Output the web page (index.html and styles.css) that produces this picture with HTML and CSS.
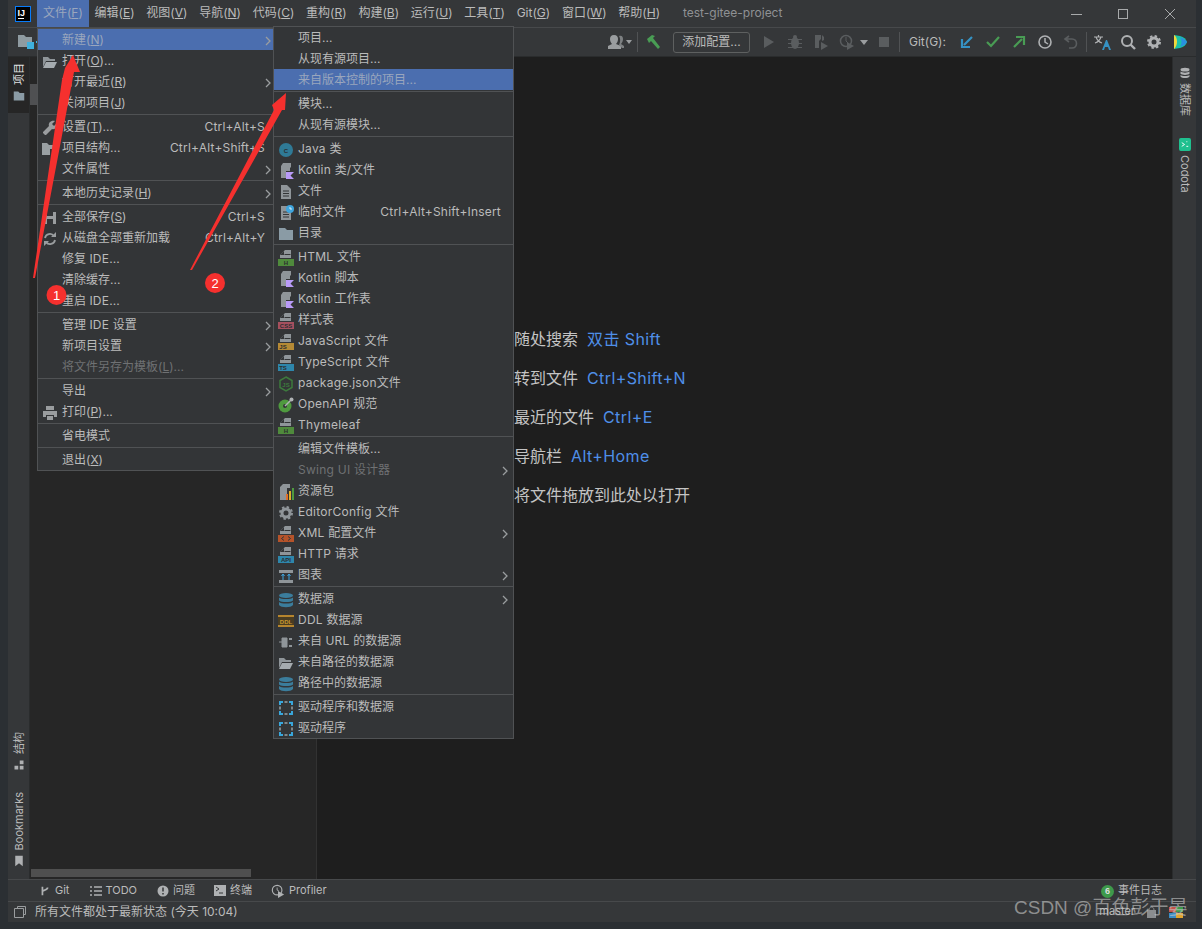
FILE: index.html
```html
<!DOCTYPE html>
<html lang="zh">
<head>
<meta charset="utf-8">
<title>test-gitee-project</title>
<link rel="stylesheet" href="styles.css">
</head>
<body>
<svg class="defs" width="0" height="0">
  <symbol id="dt" viewBox="0 0 16 16"><path d="M7 0h6v8H2V5z" fill="#8f9599"/><path d="M6 1v4H2z" fill="#333537"/><path d="M6.500 4.500H12.500" stroke="#333537"/></symbol>
  <symbol id="kt" viewBox="0 0 16 16"><path d="M5 0h8v4l-1 1v3H8v7H3V3z" fill="#8f9599"/><path d="M8 9h8l-3.500 3.500L16 16H8z" fill="#b99bf8"/></symbol>
  <symbol id="doc" viewBox="0 0 16 16"><path d="M3 1h6l4 4v10H3z" fill="#8f9599"/><path d="M5 7h6M5 9.500h6M5 12h6" stroke="#333537"/></symbol>
  <symbol id="fold" viewBox="0 0 16 16"><path d="M1 2h6l2 2h6v10H1z" fill="#8a9ba5"/></symbol>
  <symbol id="ofold" viewBox="0 0 16 16"><path d="M1 3h5l2 2h5v2H4l-3 6z" fill="#8f9599"/><path d="M4 8h11l-3 6H1z" fill="#a5abaf"/></symbol>
  <symbol id="db" viewBox="0 0 16 16"><g fill="#3b7d9c"><ellipse cx="8" cy="3.500" rx="7" ry="2.500"/><path d="M1 5.500c2 2 12 2 14 0v3c-2 2-12 2-14 0z"/><path d="M1 10c2 2 12 2 14 0v3c-2 3-12 3-14 0z"/></g></symbol>
  <symbol id="drv" viewBox="0 0 16 16"><path d="M2 5V2h3M11 2h3v3M14 11v3h-3M5 14H2v-3" fill="none" stroke="#39a7dc" stroke-width="2"/><path d="M6.500 2h3M6.500 14h3M2 6.500v3M14 6.500v3" stroke="#7f8588" stroke-width="2"/></symbol>
  <symbol id="chev" viewBox="0 0 6 10"><path d="M1 1l4 4-4 4" fill="none" stroke="#9a9d9f" stroke-width="1.300"/></symbol>
</svg>

<div class="app">
  <header class="titlebar">
    <svg class="logo" viewBox="0 0 16 16"><rect x=".5" y=".5" width="15" height="15" fill="#000" stroke="#087cfa"/><text x="2.500" y="9.500" class="logo-t">IJ</text><rect x="3" y="12" width="6" height="1" fill="#fff"/></svg>
    <nav class="menubar">
      <span class="mb active">文件(<u>F</u>)</span>
      <span class="mb">编辑(<u>E</u>)</span>
      <span class="mb">视图(<u>V</u>)</span>
      <span class="mb">导航(<u>N</u>)</span>
      <span class="mb">代码(<u>C</u>)</span>
      <span class="mb">重构(<u>R</u>)</span>
      <span class="mb">构建(<u>B</u>)</span>
      <span class="mb">运行(<u>U</u>)</span>
      <span class="mb">工具(<u>T</u>)</span>
      <span class="mb">Git(<u>G</u>)</span>
      <span class="mb">窗口(<u>W</u>)</span>
      <span class="mb">帮助(<u>H</u>)</span>
    </nav>
    <span class="wintitle">test-gitee-project</span>
    <div class="winctl">
      <svg viewBox="0 0 12 12"><path d="M1 6.500h11" stroke="#a8aaab"/></svg>
      <svg viewBox="0 0 12 12"><rect x="1.500" y="1.500" width="9" height="9" fill="none" stroke="#a8aaab"/></svg>
      <svg viewBox="0 0 12 12"><path d="M1 1l10 10M11 1L1 11" stroke="#a8aaab"/></svg>
    </div>
  </header>

  <div class="toolbar">
    <svg class="ic tb-folder" viewBox="0 0 16 16"><path d="M0 1h6l2 2h6v10H0z" fill="#8f9ba1"/><rect x="9" y="8" width="7" height="7" fill="#3fb0dd"/></svg>
    <i class="tb-dot"></i>
    <div class="tb-right">
      <span class="tbtn w-user"><svg class="ic" viewBox="0 0 24 16"><path d="M6 1c3 0 4 2 4 4s-1 4-2 5l5 2v3H0v-3l4-2C3 9 2 7 2 5s1-4 4-4z" fill="#9a9d9f"/><path d="M11 2c3-1 4 1 4 3s-1 4-2 5l3 2v2h-2l-3-3c1-2 2-6 0-9z" fill="#7d8082"/><path d="M18 6h6l-3 4z" fill="#9a9d9f"/></svg></span>
      <i class="tsep s-a"></i>
      <span class="tbtn"><svg class="ic" viewBox="0 0 16 16"><path d="M1 5l5-4 3 1-2 2 7 9-2 2-7-8-2 2z" fill="#499c54"/></svg></span>
      <button class="cfg">添加配置...</button>
      <span class="tbtn m-run"><svg class="ic" viewBox="0 0 16 16"><path d="M3 2l10 6-10 6z" fill="#5a5d5f"/></svg></span>
      <span class="tbtn"><svg class="ic" viewBox="0 0 16 16"><g fill="#5a5d5f"><ellipse cx="8" cy="9" rx="4" ry="6"/><circle cx="8" cy="3" r="2"/><path d="M1 5h14v1H1zM1 9h14v1H1zM1 13h14v1H1z"/></g></svg></span>
      <span class="tbtn"><svg class="ic" viewBox="0 0 16 16"><path d="M2 1h6v4l-2 2v7H2z" fill="#5a5d5f"/><path d="M9 1l2 2v3l-2 1z" fill="#5a5d5f"/><path d="M8 8l7 4-7 4z" fill="#5a5d5f"/></svg></span>
      <span class="tbtn"><svg class="ic" viewBox="0 0 16 16"><circle cx="7" cy="7" r="5.500" fill="none" stroke="#5a5d5f" stroke-width="1.500"/><path d="M7 3v4l2 2" fill="none" stroke="#5a5d5f"/><path d="M8 8l7 4-7 4z" fill="#5a5d5f"/></svg></span>
      <span class="tcaret"></span>
      <span class="tbtn m-stop"><svg class="ic" viewBox="0 0 16 16"><rect x="3" y="3" width="10" height="10" fill="#5a5d5f"/></svg></span>
      <i class="tsep s-b"></i>
      <span class="gitlabel">Git(G):</span>
      <span class="tbtn"><svg class="ic" viewBox="0 0 16 16"><path d="M13 3L5 11M3 5v8h8" fill="none" stroke="#3592c4" stroke-width="2.200"/></svg></span>
      <span class="tbtn"><svg class="ic" viewBox="0 0 16 16"><path d="M2 8l4 4 8-9" fill="none" stroke="#499c54" stroke-width="2.200"/></svg></span>
      <span class="tbtn"><svg class="ic" viewBox="0 0 16 16"><path d="M3 13l8-8M5 3h8v8" fill="none" stroke="#499c54" stroke-width="2.200"/></svg></span>
      <span class="tbtn"><svg class="ic" viewBox="0 0 16 16"><circle cx="8" cy="8" r="6" fill="none" stroke="#afb1b3" stroke-width="1.600"/><path d="M8 4v4l3 2" fill="none" stroke="#afb1b3" stroke-width="1.500"/></svg></span>
      <span class="tbtn"><svg class="ic" viewBox="0 0 16 16"><path d="M6 2L2 5l4 3M3 5h6c6 0 6 9 0 9H6" fill="none" stroke="#5a5d5f" stroke-width="1.600"/></svg></span>
      <i class="tsep s-c"></i>
      <span class="tbtn"><svg class="ic ic-l" viewBox="0 0 18 16"><path d="M1 3h9M5.500 1v2M3 3c1 3 3 5 6 6M8 3c-1 3-3 5-6 6" fill="none" stroke="#afb1b3" stroke-width="1.200"/><path d="M9 16l4-10h1l4 10h-2l-1-3h-3l-1 3z" fill="#3592c4"/></svg></span>
      <span class="tbtn"><svg class="ic" viewBox="0 0 16 16"><circle cx="7" cy="7" r="5" fill="none" stroke="#afb1b3" stroke-width="2"/><path d="M10.500 10.500L15 15" stroke="#afb1b3" stroke-width="2.400"/></svg></span>
      <span class="tbtn"><svg class="ic" viewBox="0 0 16 16"><circle cx="8" cy="8" r="4" fill="none" stroke="#afb1b3" stroke-width="3"/><circle cx="8" cy="8" r="6" fill="none" stroke="#afb1b3" stroke-width="2" stroke-dasharray="2.400 2.300"/></svg></span>
      <span class="tbtn"><svg class="ic" viewBox="0 0 16 16"><path d="M2 1l6 1c4 1 6 3 7 6-1 3-3 5-7 6l-6 1z" fill="#19c3a8"/><path d="M2 1c4 2 4 11 0 14z" fill="#f0d93c"/><path d="M8 3c3 1 6 3 7 5-1 2-4 4-7 5 2-3 2-7 0-10z" fill="#2a8fe0"/></svg></span>
    </div>
  </div>

  <div class="main">
    <aside class="lstripe">
      <div class="stab active"><span class="vl">项目</span><svg class="ic ic-s" viewBox="0 0 16 16"><use href="#fold"/></svg></div>
      <div class="stab push"><span class="vl">结构</span><svg class="ic ic-s" viewBox="0 0 16 16"><path d="M9 2h5v5H9zM2 9h5v5H2zM9 9h5v5H9z" fill="#afb1b3"/></svg></div>
      <div class="stab gap"><span class="vl">Bookmarks</span><svg class="ic ic-s" viewBox="0 0 16 16"><path d="M3 1h10v14l-5-4-5 4z" fill="#afb1b3"/></svg></div>
    </aside>
    <section class="panel">
      <i class="vthumb"></i>
      <i class="hthumb"></i>
    </section>
    <section class="editor">
      <p class="hint">随处搜索<span class="key">双击 Shift</span></p>
      <p class="hint">转到文件<span class="key">Ctrl+Shift+N</span></p>
      <p class="hint">最近的文件<span class="key">Ctrl+E</span></p>
      <p class="hint">导航栏<span class="key">Alt+Home</span></p>
      <p class="hint">将文件拖放到此处以打开</p>
    </section>
    <aside class="rstripe">
      <div class="rtab"><svg class="ic ic-s" viewBox="0 0 16 16"><g fill="#afb1b3"><ellipse cx="8" cy="3.500" rx="6" ry="2.500"/><path d="M2 6c2 2 10 2 12 0v3c-2 2-10 2-12 0z"/><path d="M2 10.500c2 2 10 2 12 0v2c-2 3-10 3-12 0z"/></g></svg><span class="vr">数据库</span></div>
      <div class="rtab r2"><svg class="ic ic-c" viewBox="0 0 13 14"><rect width="13" height="14" rx="2" fill="#1fc08f"/><path d="M3 5l3 2-3 2M8 4h1M8 9h2" fill="none" stroke="#fff"/></svg><span class="vr">Codota</span></div>
    </aside>
  </div>

  <div class="tooltabs">
    <span class="tt t-git"><svg class="ic ic-s" viewBox="0 0 12 14"><path d="M3 2v10M3 8c0-3 6-1 6-5" fill="none" stroke="#afb1b3" stroke-width="2"/></svg>Git</span>
    <span class="tt t-todo"><svg class="ic ic-s" viewBox="0 0 12 12"><path d="M0 2h2M4 2h8M0 6h2M4 6h8M0 10h2M4 10h8" stroke="#afb1b3" stroke-width="1.500"/></svg>TODO</span>
    <span class="tt t-prob"><svg class="ic ic-s" viewBox="0 0 12 12"><circle cx="6" cy="6" r="5.500" fill="#afb1b3"/><path d="M6 2.500v4M6 8v1.500" stroke="#333537" stroke-width="1.500"/></svg>问题</span>
    <span class="tt t-term"><svg class="ic ic-s" viewBox="0 0 12 12"><rect width="12" height="11" fill="#afb1b3"/><path d="M2 2l3 2-3 2M5 8h4" fill="none" stroke="#333537"/></svg>终端</span>
    <span class="tt t-prof"><svg class="ic ic-m" viewBox="0 0 16 16"><circle cx="7" cy="7" r="5.500" fill="none" stroke="#afb1b3" stroke-width="1.300"/><path d="M7 4v3l2 1" fill="none" stroke="#afb1b3"/><path d="M8 8l7 4-7 4z" fill="#afb1b3"/></svg>Profiler</span>
    <span class="tt t-log"><b class="count">6</b>事件日志</span>
  </div>

  <footer class="status">
    <svg class="ic ic-s st-ic" viewBox="0 0 12 12"><path d="M3.500 2.500V.500h8v8h-2M.500 2.500h9v9h-9z" fill="none" stroke="#9a9d9f"/></svg>
    <span>所有文件都处于最新状态 (今天 10:04)</span>
    <span class="branch">master</span>
    <svg class="ic lock" viewBox="0 0 9 12"><rect y="4" width="9" height="8" fill="#8a8d8f"/><path d="M2 4c0-4 5-4 5 0" fill="none" stroke="#8a8d8f"/></svg>
    <svg class="ic badge" viewBox="0 0 14 11"><path d="M0 0h7v5H0z" fill="#c4544a"/><path d="M7 0h7v5H7z" fill="#3c9a4b"/><path d="M0 6h7v5H0z" fill="#3a8cc6"/><path d="M7 6h7v5H7z" fill="#e2a52e"/></svg>
  </footer>
</div>

<div class="menu m-file">
  <div class="mi sel"><i class="mic"></i>新建(<u>N</u>)<svg class="chev"><use href="#chev"/></svg></div>
  <div class="mi"><svg class="mic" viewBox="0 0 16 16"><use href="#ofold"/></svg>打开(<u>O</u>)...</div>
  <div class="mi"><i class="mic"></i>打开最近(<u>R</u>)<svg class="chev"><use href="#chev"/></svg></div>
  <div class="mi"><i class="mic"></i>关闭项目(<u>J</u>)</div>
  <hr class="ms">
  <div class="mi"><svg class="mic" viewBox="0 0 16 16"><path d="M15 3l-3 3-2-2 3-3C9 0 6 3 7 6l-6 6v1l2 2h1l6-6c3 1 6-2 5-6z" fill="#9a9d9f"/></svg>设置(<u>T</u>)...<span class="sc">Ctrl+Alt+S</span></div>
  <div class="mi"><svg class="mic" viewBox="0 0 16 16"><path d="M0 2h5l2 2h7v4H8v6H0z" fill="#9aa0a3"/><path d="M10 9h2v2h-2zM13 9h2v2h-2zM10 12h2v2h-2zM13 12h2v2h-2z" fill="#3592c4"/></svg>项目结构...<span class="sc">Ctrl+Alt+Shift+S</span></div>
  <div class="mi"><i class="mic"></i>文件属性<svg class="chev"><use href="#chev"/></svg></div>
  <hr class="ms">
  <div class="mi"><i class="mic"></i>本地历史记录(<u>H</u>)<svg class="chev"><use href="#chev"/></svg></div>
  <hr class="ms">
  <div class="mi"><svg class="mic" viewBox="0 0 16 16"><path d="M2 2h12v12H2z" fill="#9a9d9f"/><path d="M5 2h6v4H5zM5 9h6v5H5z" fill="#333537"/></svg>全部保存(<u>S</u>)<span class="sc">Ctrl+S</span></div>
  <div class="mi"><svg class="mic" viewBox="0 0 16 16"><path d="M3 7a5 5 0 0 1 9-2M13 9a5 5 0 0 1-9 2" fill="none" stroke="#9a9d9f" stroke-width="1.800"/><path d="M14 1v5H9zM2 15v-5h5z" fill="#9a9d9f"/></svg>从磁盘全部重新加载<span class="sc">Ctrl+Alt+Y</span></div>
  <div class="mi"><i class="mic"></i>修复 <span class="lat">IDE</span>...</div>
  <div class="mi"><i class="mic"></i>清除缓存...</div>
  <div class="mi"><i class="mic"></i>重启 <span class="lat">IDE</span>...</div>
  <hr class="ms">
  <div class="mi"><i class="mic"></i>管理 <span class="lat">IDE</span> 设置<svg class="chev"><use href="#chev"/></svg></div>
  <div class="mi"><i class="mic"></i>新项目设置<svg class="chev"><use href="#chev"/></svg></div>
  <div class="mi off"><i class="mic"></i>将文件另存为模板(<u>L</u>)...</div>
  <hr class="ms">
  <div class="mi"><i class="mic"></i>导出<svg class="chev"><use href="#chev"/></svg></div>
  <div class="mi"><svg class="mic" viewBox="0 0 16 16"><path d="M4 1h8v4H4zM1 6h14v6h-3v-2H4v2H1zM5 11h6v4H5z" fill="#9a9d9f"/></svg>打印(<u>P</u>)...</div>
  <hr class="ms">
  <div class="mi"><i class="mic"></i>省电模式</div>
  <hr class="ms">
  <div class="mi"><i class="mic"></i>退出(<u>X</u>)</div>
</div>

<div class="menu m-new">
  <div class="mi"><i class="mic"></i>项目...</div>
  <div class="mi"><i class="mic"></i>从现有源项目...</div>
  <div class="mi sel"><i class="mic"></i>来自版本控制的项目...</div>
  <hr class="ms">
  <div class="mi"><i class="mic"></i>模块...</div>
  <div class="mi"><i class="mic"></i>从现有源模块...</div>
  <hr class="ms">
  <div class="mi"><svg class="mic" viewBox="0 0 16 16"><circle cx="8" cy="8" r="7" fill="#2f7a96"/><text x="8" y="11" class="ct cdark">C</text></svg><span class="lat">Java </span>类</div>
  <div class="mi"><svg class="mic" viewBox="0 0 16 16"><use href="#kt"/></svg><span class="lat">Kotlin </span>类/文件</div>
  <div class="mi"><svg class="mic" viewBox="0 0 16 16"><use href="#doc"/></svg>文件</div>
  <div class="mi"><svg class="mic" viewBox="0 0 16 16"><use href="#doc"/><circle cx="12" cy="4" r="4" fill="#3fa5dd"/><path d="M12 2v2h2" fill="none" stroke="#fff" stroke-width=".8"/></svg>临时文件<span class="sc">Ctrl+Alt+Shift+Insert</span></div>
  <div class="mi"><svg class="mic" viewBox="0 0 16 16"><use href="#fold"/></svg>目录</div>
  <hr class="ms">
  <div class="mi"><svg class="mic" viewBox="0 0 16 16"><use href="#dt"/><rect y="9" width="16" height="7" fill="#4f8a3c"/><text x="8" y="15" class="ct cdark">H</text></svg><span class="lat">HTML </span>文件</div>
  <div class="mi"><svg class="mic" viewBox="0 0 16 16"><use href="#kt"/></svg><span class="lat">Kotlin </span>脚本</div>
  <div class="mi"><svg class="mic" viewBox="0 0 16 16"><use href="#kt"/></svg><span class="lat">Kotlin </span>工作表</div>
  <div class="mi"><svg class="mic" viewBox="0 0 16 16"><use href="#dt"/><rect y="9" width="16" height="7" fill="#a5505f"/><text x="8" y="15" class="ct cdark">CSS</text></svg>样式表</div>
  <div class="mi"><svg class="mic" viewBox="0 0 16 16"><use href="#dt"/><rect y="9" width="16" height="7" fill="#b58a35"/><text x="5" y="15" class="ct cdark">JS</text></svg><span class="lat">JavaScript </span>文件</div>
  <div class="mi"><svg class="mic" viewBox="0 0 16 16"><use href="#dt"/><rect y="9" width="16" height="7" fill="#2e86ab"/><text x="5" y="15" class="ct cdark">TS</text></svg><span class="lat">TypeScript </span>文件</div>
  <div class="mi"><svg class="mic" viewBox="0 0 16 16"><path d="M8 1l6 3.500v7L8 15l-6-3.500v-7z" fill="none" stroke="#3d7a3d" stroke-width="1.500"/><text x="8" y="11" class="ct cgreen">JS</text></svg><span class="lat">package.json</span>文件</div>
  <div class="mi"><svg class="mic" viewBox="0 0 16 16"><circle cx="7" cy="9" r="6.500" fill="#4f9a3f"/><circle cx="7" cy="9" r="2" fill="#333537"/><path d="M7 9l6-6" stroke="#b0b3b5" stroke-width="1.500"/><circle cx="13.500" cy="2.500" r="2" fill="#b0b3b5"/></svg><span class="lat">OpenAPI </span>规范</div>
  <div class="mi"><svg class="mic" viewBox="0 0 16 16"><use href="#dt"/><rect y="9" width="16" height="7" fill="#4f8a3c"/><text x="8" y="15" class="ct cdark">H</text></svg><span class="lat">Thymeleaf</span></div>
  <hr class="ms">
  <div class="mi"><i class="mic"></i>编辑文件模板...</div>
  <div class="mi off"><i class="mic"></i><span class="lat">Swing UI </span>设计器<svg class="chev"><use href="#chev"/></svg></div>
  <div class="mi"><svg class="mic" viewBox="0 0 16 16"><path d="M5 0h7v4H9v12H2V3z" fill="#8f9599"/><path d="M8 10h2v6H8z" fill="#e0702a"/><path d="M11 7h2v9h-2z" fill="#e0b12a"/><path d="M14 4h2v12h-2z" fill="#4f9a3f"/></svg>资源包</div>
  <div class="mi"><svg class="mic" viewBox="0 0 16 16"><circle cx="8" cy="8" r="4" fill="none" stroke="#8f9599" stroke-width="3"/><circle cx="8" cy="8" r="6" fill="none" stroke="#8f9599" stroke-width="2" stroke-dasharray="2.400 2.300"/></svg><span class="lat">EditorConfig </span>文件</div>
  <div class="mi"><svg class="mic" viewBox="0 0 16 16"><use href="#dt"/><rect y="9" width="16" height="7" fill="#b5532a"/><path d="M6 10.500l-2.500 2 2.500 2M10 10.500l2.500 2-2.500 2" fill="none" stroke="#333537"/></svg><span class="lat">XML </span>配置文件<svg class="chev"><use href="#chev"/></svg></div>
  <div class="mi"><svg class="mic" viewBox="0 0 16 16"><use href="#dt"/><rect y="9" width="16" height="7" fill="#2e86ab"/><text x="8" y="15" class="ct cdark">API</text></svg><span class="lat">HTTP </span>请求</div>
  <div class="mi"><svg class="mic" viewBox="0 0 16 16"><path d="M1 2h14v3H1zM1 12h14v3H1z" fill="#8f9599"/><path d="M5 12V6M3.500 8L5 6l1.500 2M11 12V6M9.500 8L11 6l1.500 2" fill="none" stroke="#3fa5dd"/></svg>图表<svg class="chev"><use href="#chev"/></svg></div>
  <hr class="ms">
  <div class="mi"><svg class="mic" viewBox="0 0 16 16"><use href="#db"/></svg>数据源<svg class="chev"><use href="#chev"/></svg></div>
  <div class="mi"><svg class="mic" viewBox="0 0 16 16"><rect x="0" y="2" width="16" height="2" fill="#b5852e"/><rect x="0" y="12" width="16" height="2" fill="#b5852e"/><rect x="0" y="4" width="16" height="8" fill="#4a3d22"/><text x="8" y="10.500" class="ct cyel">DDL</text></svg><span class="lat">DDL </span>数据源</div>
  <div class="mi"><svg class="mic" viewBox="0 0 16 16"><path d="M1 8h3M4 4h5v9H4z" fill="#8f9599" stroke="#8f9599"/><path d="M11 4h3v2h-3zM11 11h3v2h-3z" fill="#8f9599"/></svg>来自 <span class="lat">URL </span>的数据源</div>
  <div class="mi"><svg class="mic" viewBox="0 0 16 16"><use href="#ofold"/></svg>来自路径的数据源</div>
  <div class="mi"><svg class="mic" viewBox="0 0 16 16"><use href="#db"/></svg>路径中的数据源</div>
  <hr class="ms">
  <div class="mi"><svg class="mic" viewBox="0 0 16 16"><use href="#drv"/></svg>驱动程序和数据源</div>
  <div class="mi"><svg class="mic" viewBox="0 0 16 16"><use href="#drv"/></svg>驱动程序</div>
</div>

<svg class="annot" viewBox="0 0 1202 929">
  <path d="M33 278L62 80 65 68 73 55 80 72 74 72 35 278z" fill="#f5302e"/>
  <path d="M190 270L274 110 272 105 286 93 285 110 282 110 192 270z" fill="#f5302e"/>
  <circle cx="56.500" cy="295" r="10" fill="#f5302e"/>
  <circle cx="215" cy="283" r="10" fill="#f5302e"/>
  <text x="56.500" y="299.500" class="num">1</text>
  <text x="215" y="287.500" class="num">2</text>
</svg>

<div class="wm">CSDN @百色彭于晏</div>
</body>
</html>
```
FILE: styles.css
```css
* { box-sizing: border-box; }
html, body { margin: 0; height: 100%; }
body {
  background: #2b2f33;
  color: #bbbbbb;
  font: 12px/1.2 Inter, "Noto Sans CJK SC", sans-serif;
  overflow: hidden;
  position: relative;
}
.defs { position: absolute; }
u { text-underline-offset: 1px; }
p { margin: 0; }

.app {
  margin-left: 8px;
  width: 1188px;
  height: 922px;
  display: flex;
  flex-direction: column;
  background: #353739;
}
.ic { width: 16px; height: 16px; display: block; flex: none; }
.ic-s { width: 12px; height: 12px; }
.ic-m { width: 14px; height: 14px; }
.ic-l { width: 18px; }
.ic-c { width: 12px; height: 13px; }

/* title bar */
.titlebar { height: 28px; flex: none; display: flex; align-items: center; border-bottom: 1px solid #47494b; }
.logo { width: 16px; height: 16px; margin-left: 7px; margin-right: 6px; flex: none; }
.logo-t { font: 700 9px "Liberation Sans", sans-serif; fill: #fff; }
.menubar { display: flex; height: 100%; }
.mb { padding: 0 5.900px; display: flex; align-items: center; color: #bbbbbb; white-space: pre; }
.mb.active { background: #4b6eaf; color: #9aa6bd; }
.wintitle { margin-left: 17px; color: #8f9194; }
.winctl { margin-left: auto; display: flex; gap: 35px; padding-right: 20px; }
.winctl svg { width: 12px; height: 12px; display: block; }

/* toolbar */
.toolbar { height: 29px; flex: none; display: flex; align-items: center; border-bottom: 1px solid #2a2c2d; }
.tb-folder { margin-left: 10px; }
.tb-dot { display: block; width: 1px; height: 2px; margin-left: 2px; background: #3fb0dd; }
.tb-right { margin-left: auto; display: flex; align-items: center; padding-right: 3px; }
.tbtn { width: 26px; height: 22px; display: flex; align-items: center; justify-content: center; flex: none; }
.w-user { width: 28px; }
.w-user .ic { width: 24px; }
.tsep { display: block; width: 1px; height: 20px; background: #505254; flex: none; }
.s-a { margin: 0 3px; }
.s-b { margin: 0 9px 0 2px; }
.s-c { margin: 0 2px; }
.cfg {
  margin-left: 6px; width: 77px; height: 21px; padding: 0;
  background: #353739; border: 1px solid #5e6060; border-radius: 3px;
  color: #bbbbbb; font: inherit;
}
.m-run { margin-left: 6px; }
.tcaret { width: 0; height: 0; border: 4px solid transparent; border-top: 5px solid #9a9d9f; border-bottom: 0; margin: 0 1px 0 0; }
.m-stop { margin-left: 2px; }
.gitlabel { width: 42px; flex: none; white-space: nowrap; margin-right: 3px; }

/* main */
.main { flex: 1; min-height: 0; display: flex; }
.lstripe { width: 22px; flex: none; display: flex; flex-direction: column; align-items: center; border-right: 1px solid #2a2c2d; padding-bottom: 12px; }
.stab { display: flex; flex-direction: column; align-items: center; gap: 5px; width: 100%; padding-left: 1px; }
.stab.active { background: #262626; padding-top: 6px; height: 56px; color: #dfdfdf; }
.stab.push { margin-top: auto; }
.stab.gap { margin-top: 21px; }
.vl { writing-mode: vertical-rl; text-orientation: sideways; transform: rotate(180deg); font-size: 11px; line-height: 14px; }
.panel { width: 287px; flex: none; background: #262626; border-right: 1px solid #323232; position: relative; }
.vthumb { position: absolute; left: 0; top: 27px; width: 7px; height: 21px; background: #4f5052; }
.hthumb { position: absolute; left: 1px; bottom: 2px; width: 220px; height: 8px; background: #4f4f4f; }
.editor { flex: 1; min-width: 0; background: #1e1e1e; padding: 271px 0 0 197px; display: flex; flex-direction: column; gap: 17px; }
.hint { font-size: 16px; line-height: 22px; color: #c4c4c4; white-space: nowrap; }
.key { color: #4f8fe8; margin-left: 9px; letter-spacing: .4px; }
.rstripe { width: 24px; flex: none; display: flex; flex-direction: column; align-items: center; padding-top: 10px; border-left: 1px solid #2a2c2d; }
.rtab { display: flex; flex-direction: column; align-items: center; gap: 4px; }
.r2 { margin-top: 22px; }
.vr { writing-mode: vertical-rl; text-orientation: sideways; line-height: 14px; font-size: 11px; }

/* bottom */
.tooltabs { height: 22px; flex: none; display: flex; align-items: center; border-top: 1px solid #47494b; font-size: 11px; padding-top: 1px; }
.tt { display: flex; align-items: center; gap: 4px; white-space: nowrap; }
.t-git { margin-left: 31px; }
.t-todo { margin-left: 21px; gap: 3px; }
.t-prob { margin-left: 20px; }
.t-term { margin-left: 19px; }
.t-prof { margin-left: 19px; gap: 4px; }
.t-log { margin-left: auto; margin-right: 34px; gap: 4px; }
.count { width: 13px; height: 13px; border-radius: 50%; background: #3e9a4b; color: #ddd; font: 700 9px/13px "Liberation Sans", sans-serif; text-align: center; }
.status { height: 21px; flex: none; display: flex; align-items: center; border-top: 1px solid #47494b; }
.st-ic { margin: 0 9px 0 6px; }
.branch { margin-left: auto; margin-right: 12px; font-size: 11px; }
.lock { width: 9px; height: 12px; margin-right: 13px; }
.badge { width: 14px; height: 11px; margin-right: 13px; }

/* popup menus */
.menu { position: absolute; background: #333537; border: 1px solid #505254; }
.m-file { left: 37px; top: 28px; width: 238px; z-index: 2; }
.m-new { left: 273px; top: 26px; width: 241px; z-index: 3; }
.mi { height: 21px; display: flex; align-items: center; padding: 2px 0 0 4px; white-space: pre; color: #bbbbbb; }
.mic { width: 16px; height: 16px; margin-right: 4px; flex: none; display: block; }
.mi.sel { background: #4b6eaf; color: #9aa6bd; }
.mi.off { color: #6f7173; }
.lat { letter-spacing: .25px; }
.sc { margin-left: auto; padding-right: 9px; letter-spacing: .2px; }
.m-new .sc { padding-right: 12px; }
.chev { width: 6px; height: 10px; margin-left: auto; margin-right: 3px; flex: none; }
.m-new .chev { margin-right: 5px; }
.ms { border: 0; height: 1px; background: #505254; margin: 1px 0; }

.ct { font: 700 6px "Liberation Sans", sans-serif; text-anchor: middle; }
.cdark { fill: #2b2d2f; }
.cgreen { fill: #3d7a3d; }
.cyel { fill: #c9992f; }

/* annotations */
.annot { position: absolute; left: 0; top: 0; width: 1202px; height: 929px; z-index: 5; pointer-events: none; }
.num { font: 13px "Liberation Sans", sans-serif; fill: #fff; text-anchor: middle; }
.wm { position: absolute; left: 1014px; top: 897px; z-index: 6; font: 19px/22px "Liberation Sans", "Noto Sans CJK SC", sans-serif; color: rgba(200, 200, 200, .62); white-space: nowrap; }
```
